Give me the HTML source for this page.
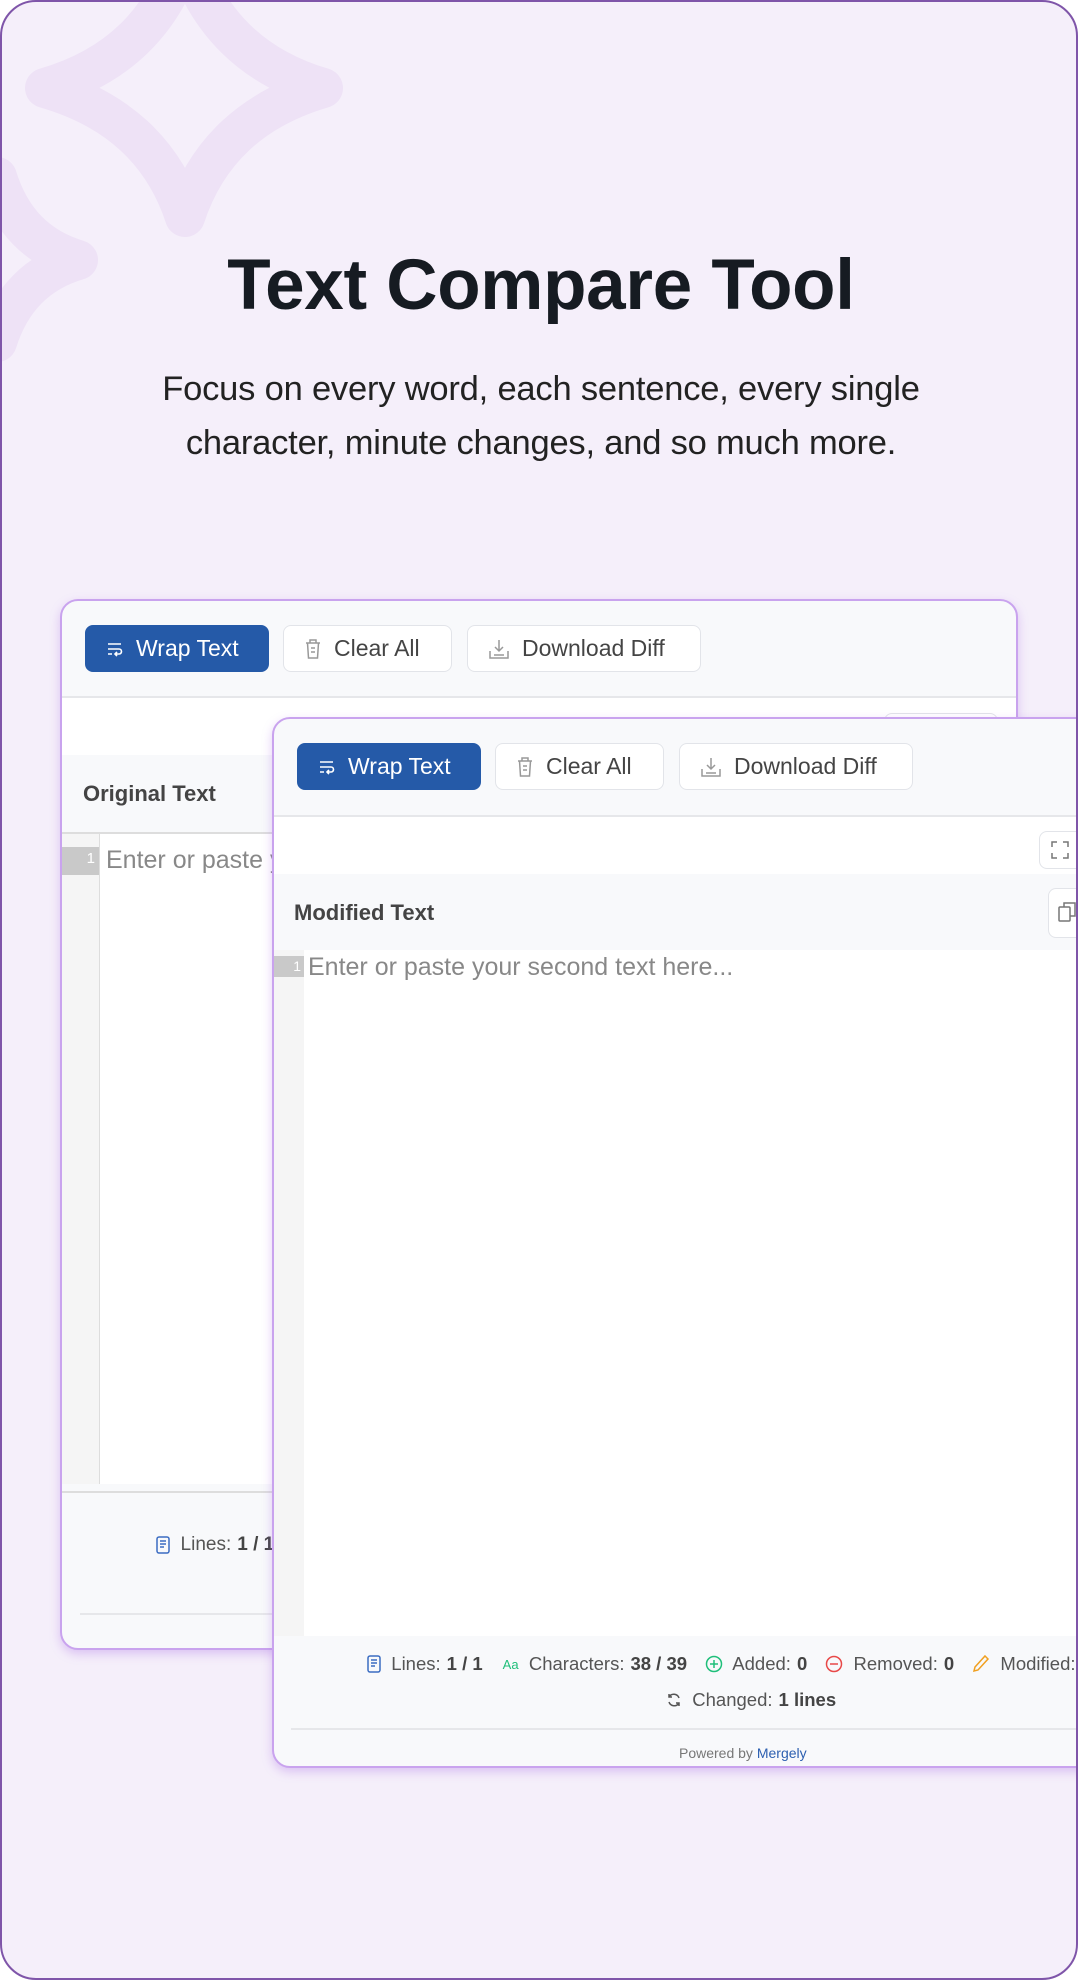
<!DOCTYPE html>
<html><head><meta charset="utf-8"><style>
*{box-sizing:border-box;margin:0;padding:0}
html,body{width:1078px;height:1980px;background:#fff;overflow:hidden;font-family:"Liberation Sans",sans-serif}
.page{position:absolute;left:0;top:0;width:1078px;height:1980px;background:#f5effa;border:2px solid #7f55a9;border-radius:36px;overflow:hidden}
h1{position:absolute;left:0;width:1078px;top:243px;text-align:center;font-size:71px;font-weight:bold;color:#161b22;letter-spacing:-0.3px}
.sub{position:absolute;left:0;width:1078px;top:360px;text-align:center;font-size:34.5px;line-height:54px;color:#222;letter-spacing:-0.2px}
.card{position:absolute;background:#f8f9fb;border:2px solid #c9a3ee;border-radius:18px;overflow:hidden;box-shadow:0 4px 10px rgba(170,110,230,.35)}
.btn{position:absolute;height:47px;border:1.5px solid #e2e4e9;border-radius:8px;background:#fff;color:#444;font-size:23px;display:flex;align-items:center;padding-left:20px;gap:12px}
.btn.blue{background:#255aa8;border-color:#255aa8;color:#fff}
.btn svg{flex:none}
.hl{position:absolute;height:1.5px;background:#e6e7ea}
.hdr{position:absolute;font-size:22px;font-weight:bold;color:#444}
.ph{position:absolute;font-size:25px;color:#888}
.stat{position:absolute;font-size:19px;color:#555;white-space:nowrap;display:flex;align-items:center}
.stat b{color:#444;margin-left:6px}
</style></head><body><div class="page">
<svg width="1078" height="420" style="position:absolute;left:0;top:0" fill="none" stroke="#eee2f6" stroke-width="40" stroke-linejoin="round">
<path d="M183,-50 Q215,55 321,86 Q215,117 183,215 Q151,117 43,86 Q151,55 183,-50Z"/>
<path d="M-5,175 Q15,240 76,258 Q15,276 -5,340 Q-25,276 -80,258 Q-25,240 -5,175Z"/>
</svg>
<h1>Text Compare Tool</h1>
<div class="sub">Focus on every word, each sentence, every single<br>character, minute changes, and so much more.</div>

<div class="card" style="left:58px;top:597px;width:958px;height:1051px">
 <div class="btn blue" style="left:23px;top:24px;width:184px"><svg width="18" height="16" viewBox="0 0 18 16" stroke="#fff" stroke-width="1.6" fill="none"><path d="M2 3h13M2 8h11a2.5 2.5 0 0 1 0 5H9M11 11l-2 2 2 2M2 13h4"/></svg>Wrap Text</div>
 <div class="btn" style="left:221px;top:24px;width:169px"><svg width="18" height="22" viewBox="0 0 18 22" stroke="#999" stroke-width="1.5" fill="none"><path d="M2 5h14M6 5V2h6v3M3.5 5l1 15h9l1-15M7 10h4M7 14h4"/></svg>Clear All</div>
 <div class="btn" style="left:405px;top:24px;width:234px"><svg width="22" height="22" viewBox="0 0 22 22" stroke="#999" stroke-width="1.5" fill="none"><path d="M11 2v11M7 9l4 4 4-4M2 13v7h18v-7M6 17h10"/></svg>Download Diff</div>
 <div class="hl" style="left:0;top:95px;width:958px"></div>
 <div style="position:absolute;left:0;top:97px;width:958px;height:57px;background:#fff"></div>
 <div style="position:absolute;left:822px;top:112px;width:114px;height:40px;border:1.5px solid #e2e4e9;border-radius:8px;background:#fff"></div>
 <div class="hdr" style="left:21px;top:180px">Original Text</div>
 <div class="hl" style="left:0;top:231px;width:958px;background:#ddd"></div>
 <div style="position:absolute;left:0;top:233px;width:958px;height:650px;background:#fff"></div>
 <div style="position:absolute;left:0;top:233px;width:38px;height:650px;background:#f5f5f5;border-right:1.5px solid #ddd"></div>
 <div style="position:absolute;left:0;top:246px;width:37px;height:28px;background:#c9c9c9;color:#fff;font-size:15px;text-align:right;padding-right:4px;line-height:24px">1</div>
 <div class="ph" style="left:44px;top:245px">Enter or paste your first text here...</div>
 <div class="hl" style="left:0;top:890px;width:958px;background:#ddd"></div>
 <div class="stat" style="left:94px;top:933px"><svg width="14" height="18" viewBox="0 0 14 18" fill="none" stroke="#3b6cc2" stroke-width="1.5"><rect x="1" y="1" width="12" height="16" rx="2"/><path d="M4 5h6M4 8h6M4 11h4"/></svg>&nbsp; Lines:<b>1 / 1</b></div>
 <div class="hl" style="left:18px;top:1012px;width:920px"></div>
</div>

<div class="card" style="left:270px;top:715px;width:830px;height:1051px">
 <div class="btn blue" style="left:23px;top:24px;width:184px"><svg width="18" height="16" viewBox="0 0 18 16" stroke="#fff" stroke-width="1.6" fill="none"><path d="M2 3h13M2 8h11a2.5 2.5 0 0 1 0 5H9M11 11l-2 2 2 2M2 13h4"/></svg>Wrap Text</div>
 <div class="btn" style="left:221px;top:24px;width:169px"><svg width="18" height="22" viewBox="0 0 18 22" stroke="#999" stroke-width="1.5" fill="none"><path d="M2 5h14M6 5V2h6v3M3.5 5l1 15h9l1-15M7 10h4M7 14h4"/></svg>Clear All</div>
 <div class="btn" style="left:405px;top:24px;width:234px"><svg width="22" height="22" viewBox="0 0 22 22" stroke="#999" stroke-width="1.5" fill="none"><path d="M11 2v11M7 9l4 4 4-4M2 13v7h18v-7M6 17h10"/></svg>Download Diff</div>
 <div class="hl" style="left:0;top:96px;width:830px"></div>
 <div style="position:absolute;left:0;top:98px;width:830px;height:57px;background:#fff"></div>
 <div style="position:absolute;left:765px;top:112px;width:60px;height:38px;border:1.5px solid #e2e4e9;border-radius:8px;background:#fff"><svg width="18" height="18" viewBox="0 0 18 18" style="position:absolute;left:11px;top:9px" stroke="#777" stroke-width="1.5" fill="none"><path d="M1 6V1h5M12 1h5v5M17 12v5h-5M6 17H1v-5"/></svg></div>
 <div class="hdr" style="left:20px;top:181px">Modified Text</div>
 <div style="position:absolute;left:774px;top:169px;width:60px;height:50px;border:1.5px solid #e2e4e9;border-radius:8px;background:#fff"><svg width="20" height="22" viewBox="0 0 20 22" style="position:absolute;left:9px;top:12px" stroke="#777" stroke-width="1.5" fill="none"><rect x="1" y="6" width="11" height="14" rx="1"/><path d="M6 6V2h11v13h-5"/></svg></div>
 <div style="position:absolute;left:0;top:231px;width:830px;height:686px;background:#fff"></div>
 <div style="position:absolute;left:0;top:231px;width:30px;height:686px;background:#f5f5f5"></div>
 <div style="position:absolute;left:0;top:237px;width:30px;height:21px;background:#c9c9c9;color:#fff;font-size:14px;text-align:right;padding-right:3px;line-height:20px">1</div>
 <div class="ph" style="left:34px;top:234px">Enter or paste your second text here...</div>
 <div class="stat" style="left:93px;top:934px;font-size:18.5px"><svg width="14" height="18" viewBox="0 0 14 18" fill="none" stroke="#3b6cc2" stroke-width="1.5"><rect x="1" y="1" width="12" height="16" rx="2"/><path d="M4 5h6M4 8h6M4 11h4"/></svg>&nbsp; Lines:<b>1 / 1</b>
 <span style="color:#1fbf7a;font-size:13px;margin-left:20px">Aa</span>&nbsp;&nbsp;Characters:<b>38 / 39</b>
 <svg style="margin-left:18px" width="18" height="18" viewBox="0 0 18 18" fill="none" stroke="#1fbf7a" stroke-width="1.5"><circle cx="9" cy="9" r="7.5"/><path d="M9 5v8M5 9h8"/></svg>&nbsp; Added:<b>0</b>
 <svg style="margin-left:18px" width="18" height="18" viewBox="0 0 18 18" fill="none" stroke="#e84848" stroke-width="1.5"><circle cx="9" cy="9" r="7.5"/><path d="M5 9h8"/></svg>&nbsp; Removed:<b>0</b>
 <svg style="margin-left:18px" width="18" height="20" viewBox="0 0 18 20" fill="none" stroke="#f0a020" stroke-width="1.5"><path d="M13 2l3 3L6 16l-4 1 1-4z"/></svg>&nbsp; Modified:<b>1</b></div>
 <div class="stat" style="left:392px;top:970px;font-size:18.5px"><svg width="16" height="16" viewBox="0 0 16 16" fill="none" stroke="#555" stroke-width="1.5"><path d="M13 6A5.5 5.5 0 0 0 3 5M3 10a5.5 5.5 0 0 0 10 1M3 2v3h3M13 14v-3h-3"/></svg>&nbsp;&nbsp;Changed:<b>1 lines</b></div>
 <div class="hl" style="left:17px;top:1009px;width:813px"></div>
 <div style="position:absolute;left:405px;top:1026px;font-size:14px;color:#777">Powered by <span style="color:#2c5fb0">Mergely</span></div>
</div>
</div></body></html>
